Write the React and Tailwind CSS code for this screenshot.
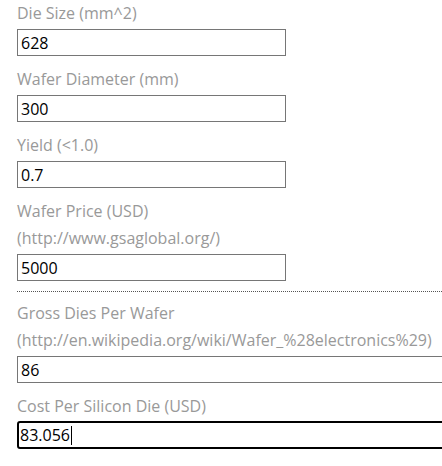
const labelCls = "block text-[16px] leading-[27px] text-[#999999]";
const inputCls =
  "block h-[27px] border border-[#767676] bg-white px-[3px] text-[16px] text-black outline-none";

function Field({ label, sub, value, wide }) {
  return (
    <div className="mb-[10px]">
      <label className={labelCls}>
        {label}
        {sub && <span className="block">{sub}</span>}
      </label>
      <input
        readOnly
        value={value}
        className={`${inputCls} mt-[2px] ${wide ? "w-[500px]" : "w-[269px]"}`}
      />
    </div>
  );
}

export default function App() {
  return (
    <div
      className="w-[442px] h-[466px] overflow-hidden bg-white pl-[17px]"
      style={{ fontFamily: '"Open Sans", sans-serif' }}
    >
      <Field label="Die Size (mm^2)" value="628" />
      <Field label="Wafer Diameter (mm)" value="300" />
      <Field label="Yield (<1.0)" value="0.7" />
      <Field label="Wafer Price (USD)" sub="(http://www.gsaglobal.org/)" value="5000" />
      <div className="mb-[8px] border-t border-dotted border-[#555]" />
      <Field
        label="Gross Dies Per Wafer"
        sub="(http://en.wikipedia.org/wiki/Wafer_%28electronics%29)"
        value="86"
        wide
      />
      <div className="mb-[10px]">
        <label className={labelCls}>Cost Per Silicon Die (USD)</label>
        <div className="mt-[1px] flex h-[28px] w-[500px] items-center rounded-[3px] border-2 border-black bg-white px-[1px] text-[16px] text-black">
          <span>83.056</span>
          <span className="ml-px h-[19px] w-px bg-black" />
        </div>
      </div>
    </div>
  );
}
